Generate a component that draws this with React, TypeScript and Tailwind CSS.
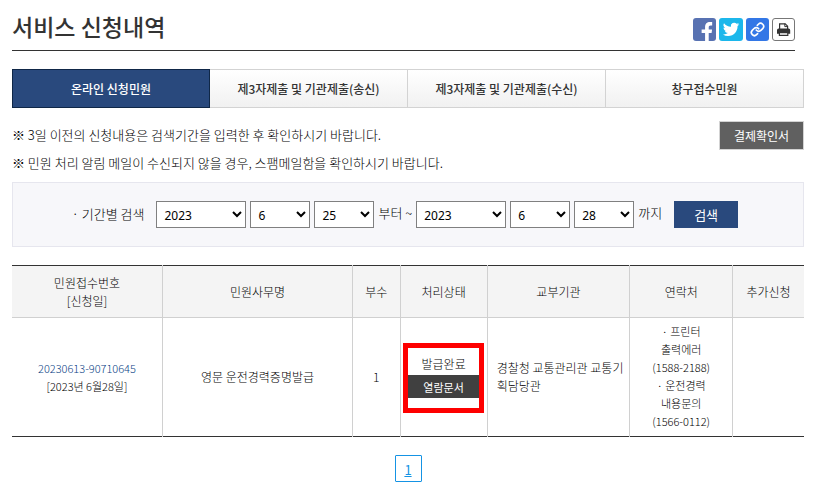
import React from "react";

const tabs = [
  "온라인 신청민원",
  "제3자제출 및 기관제출(송신)",
  "제3자제출 및 기관제출(수신)",
  "창구접수민원",
];

const contactLines = ["· 프린터", "출력에러", "(1588-2188)", "· 운전경력", "내용문의", "(1566-0112)"];

const years = ["2021", "2022", "2023"];
const months = Array.from({ length: 12 }, (_, i) => String(i + 1));
const days = Array.from({ length: 31 }, (_, i) => String(i + 1));

function DateSelect({
  label,
  value,
  options,
  wide = false,
}: {
  label: string;
  value: string;
  options: string[];
  wide?: boolean;
}) {
  return (
    <select
      aria-label={label}
      defaultValue={value}
      className={`h-[27px] border border-[#808080] bg-white pt-[2px] pl-[3px] font-['Noto_Sans','Noto_Sans_CJK_KR',sans-serif] text-xs font-normal text-black ${
        wide ? "w-[90px]" : "w-[60px]"
      }`}
    >
      {options.map((o) => (
        <option key={o}>{o}</option>
      ))}
    </select>
  );
}

function ShareLinks() {
  return (
    <div className="flex gap-[3px]">
      <a href="#facebook" aria-label="페이스북" className="size-[23px] overflow-hidden rounded-[3px] bg-[#5872b2]">
        <svg viewBox="0 0 24 24" className="size-[23px]">
          <path
            fill="#fff"
            d="M12.6 24v-8.3H9v-3.6h3.6V9.6c0-3.8 1.9-5.5 5.2-5.5h2.2v3.6h-1.5c-1.7 0-2.1.7-2.1 2.1v2.3h3.5l-.5 3.6h-3V24z"
          />
        </svg>
      </a>
      <a href="#twitter" aria-label="트위터" className="h-[23px] w-6 rounded-[3px] bg-[#1cb7eb]">
        <svg viewBox="0 0 24 23" className="h-[23px] w-6">
          <path
            fill="#fff"
            transform="translate(3.9 3.2) scale(.68)"
            d="M23.95 4.57a10 10 0 0 1-2.82.77 4.96 4.96 0 0 0 2.16-2.72c-.95.55-2 .95-3.13 1.18a4.92 4.92 0 0 0-8.38 4.48C7.69 8.1 4.07 6.13 1.64 3.16a4.92 4.92 0 0 0 1.52 6.57 4.9 4.9 0 0 1-2.23-.61v.06a4.92 4.92 0 0 0 3.95 4.83 5 5 0 0 1-2.21.08 4.94 4.94 0 0 0 4.6 3.42A9.87 9.87 0 0 1 0 19.54a13.99 13.99 0 0 0 7.55 2.21c9.05 0 14-7.5 14-13.98 0-.21 0-.42-.02-.63a9.94 9.94 0 0 0 2.46-2.55z"
          />
        </svg>
      </a>
      <a href="#link" aria-label="주소 복사" className="size-[23px] rounded-[3px] bg-[#3377e6]">
        <svg
          viewBox="0 0 24 24"
          className="size-[23px]"
          fill="none"
          stroke="#fff"
          strokeWidth="2.7"
          strokeLinecap="round"
          strokeLinejoin="round"
        >
          <g transform="translate(4.3 4.3) scale(.64)">
            <path d="M10 13a5 5 0 0 0 7.54.54l3-3a5 5 0 0 0-7.07-7.07l-1.72 1.71" />
            <path d="M14 11a5 5 0 0 0-7.54-.54l-3 3a5 5 0 0 0 7.07 7.07l1.71-1.71" />
          </g>
        </svg>
      </a>
      <button type="button" aria-label="인쇄" className="size-[23px] rounded-[3px] border border-[#777] bg-white">
        <svg viewBox="0 0 21 21" className="size-[21px]">
          <path d="M6.6 10V4.8h5.6l2.4 2.4V10" fill="#fff" stroke="#333" strokeWidth="1.2" />
          <path d="M11.8 4.6v3h3" fill="none" stroke="#333" />
          <path d="M5.6 9.6h10a1.6 1.6 0 0 1 1.6 1.6v3.6h-13.2v-3.6A1.6 1.6 0 0 1 5.6 9.6z" fill="#333" />
          <path d="M6.4 13.6h8.4v2.8h-8.4z" fill="#fff" stroke="#333" strokeWidth="1.2" />
        </svg>
      </button>
    </div>
  );
}

export default function App() {
  const th = "border-r border-[#d0d0d0] font-light last:border-r-0";
  const td = "border-r border-[#d0d0d0] last:border-r-0";
  return (
    <main className="bg-white pr-[11px] pl-3 font-['Noto_Sans_CJK_KR',sans-serif] text-xs text-[#333]">
      <header className="mr-[9px] flex h-[51px] items-start justify-between border-b border-[#333]">
        <h1 className="pt-[10px] text-[23px] leading-8 font-medium">서비스 신청내역</h1>
        <div className="pt-[18px]">
          <ShareLinks />
        </div>
      </header>

      <nav className="mt-[18px] grid h-[39px] grid-cols-4">
        {tabs.map((t, i) => (
          <a
            key={t}
            href={`#tab${i + 1}`}
            className={
              i === 0
                ? "flex items-center justify-center border border-[#0f2747] bg-[#29497d] font-medium text-white"
                : "flex items-center justify-center border-y border-r border-[#d3d3d3] bg-linear-to-b from-white to-[#f1f1f1] font-medium"
            }
          >
            {t}
          </a>
        ))}
      </nav>

      <section className="mt-[13px] flex items-start justify-between">
        <div className="text-[13px] leading-7 font-light text-black">
          <p>※ 3일 이전의 신청내용은 검색기간을 입력한 후 확인하시기 바랍니다.</p>
          <p>※ 민원 처리 알림 메일이 수신되지 않을 경우, 스팸메일함을 확인하시기 바랍니다.</p>
        </div>
        <button type="button" className="h-[29px] w-[85px] border border-[#d3d3d3] bg-[#606060] text-white">
          결제확인서
        </button>
      </section>

      <form
        onSubmit={(e) => e.preventDefault()}
        className="mt-[5px] flex h-[65px] items-center justify-center gap-1 border border-[#e6e6ee] bg-[#f7f7fa] pr-[6px] text-[13px] font-light text-black"
      >
        <span className="mr-2 pb-[2px]">· 기간별 검색</span>
        <DateSelect label="시작 연도" value="2023" options={years} wide />
        <DateSelect label="시작 월" value="6" options={months} />
        <DateSelect label="시작 일" value="25" options={days} />
        <span className="pb-1">부터 ~</span>
        <DateSelect label="종료 연도" value="2023" options={years} wide />
        <DateSelect label="종료 월" value="6" options={months} />
        <DateSelect label="종료 일" value="28" options={days} />
        <span className="pb-1">까지</span>
        <button type="submit" className="ml-2 h-[27px] w-16 bg-[#29497d] font-normal text-white">
          검색
        </button>
      </form>

      <table className="mt-[18px] w-full table-fixed border-collapse border-y border-[#333] text-center leading-[18px] font-light text-black">
        <colgroup>
          <col className="w-[19%]" />
          <col className="w-[24%]" />
          <col className="w-[6%]" />
          <col className="w-[11%]" />
          <col className="w-[18%]" />
          <col className="w-[13%]" />
          <col className="w-[9%]" />
        </colgroup>
        <thead>
          <tr className="h-[52px] border-b border-[#d0d0d0] bg-[#f4f4f4]">
            <th scope="col" className={th}>
              민원접수번호
              <br />
              [신청일]
            </th>
            <th scope="col" className={th}>민원사무명</th>
            <th scope="col" className={th}>부수</th>
            <th scope="col" className={th}>처리상태</th>
            <th scope="col" className={th}>교부기관</th>
            <th scope="col" className={th}>연락처</th>
            <th scope="col" className={th}>추가신청</th>
          </tr>
        </thead>
        <tbody>
          <tr className="h-[119px]">
            <td className={`${td} text-[11px]`}>
              <a href="#receipt" className="text-[#0b3f86]">20230613-90710645</a>
              <br />
              [2023년 6월28일]
            </td>
            <td className={td}>영문 운전경력증명발급</td>
            <td className={td}>1</td>
            <td className={td}>
              <div className="mx-auto mt-[2px] h-[70px] w-[81px] border-[5px] border-[#fe0000] pt-[5px]">
                <p className="leading-[22px]">발급완료</p>
                <button type="button" className="h-[23px] w-full bg-[#404040] text-[11px] font-normal text-white">
                  열람문서
                </button>
              </div>
            </td>
            <td className={`${td} pr-1 pl-[9px] text-left break-all`}>경찰청 교통관리관 교통기획담당관</td>
            <td className={`${td} pb-[2px] text-[11px]`}>
              {contactLines.map((l) => (
                <p key={l}>{l}</p>
              ))}
            </td>
            <td className={td}></td>
          </tr>
        </tbody>
      </table>

      <nav aria-label="페이지" className="mt-[18px] flex justify-center">
        <a
          href="#page1"
          aria-current="page"
          className="flex size-[27px] items-center justify-center rounded-[1px] border border-[#1593e4] pt-[2px] text-[13px] text-[#1593e4] underline"
        >
          1
        </a>
      </nav>
    </main>
  );
}
